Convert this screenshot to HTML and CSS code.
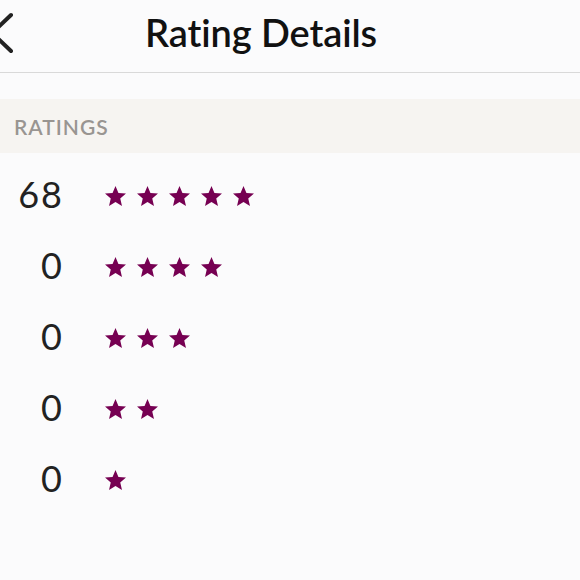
FILE: index.html
```html
<!DOCTYPE html>
<html lang="en">
<head>
    <meta charset="UTF-8">
    <meta name="viewport" content="width=device-width, initial-scale=1.0">
    <title>Rating Details</title>
    <link rel="stylesheet" href="styles.css">
</head>
<body>
    <div class="header">
        <button class="back-btn" aria-label="Back">
            <svg width="14" height="42" viewBox="0 0 14 42">
                <path d="M11 3 L-8 21 L11 39" fill="none" stroke="#222" stroke-width="4" stroke-linecap="round" stroke-linejoin="round"/>
            </svg>
        </button>
        <h1>Rating Details</h1>
    </div>

    <div class="section-title">RATINGS</div>

    <div class="ratings">
        <div class="rating-row">
            <span class="count">68</span>
            <span class="stars" data-stars="5"></span>
        </div>
        <div class="rating-row">
            <span class="count">0</span>
            <span class="stars" data-stars="4"></span>
        </div>
        <div class="rating-row">
            <span class="count">0</span>
            <span class="stars" data-stars="3"></span>
        </div>
        <div class="rating-row">
            <span class="count">0</span>
            <span class="stars" data-stars="2"></span>
        </div>
        <div class="rating-row">
            <span class="count">0</span>
            <span class="stars" data-stars="1"></span>
        </div>
    </div>

    <script>
        const star = `<svg class="star" width="23" height="23" viewBox="0 0 24 24"><path d="M12 1L15.06 8.29L22.94 8.95L16.95 14.11L18.76 21.8L12 17.7L5.24 21.8L7.05 14.11L1.06 8.95L8.94 8.29Z"/></svg>`;
        document.querySelectorAll(".stars").forEach(el => {
            el.innerHTML = star.repeat(parseInt(el.dataset.stars));
        });
    </script>
</body>
</html>
```

FILE: styles.css
```css
body {
    font-family: Lato, "Open Sans", sans-serif;
    margin: 0;
    padding: 0;
    background-color: #fbfbfc;
    color: #222;
}
.header {
    display: flex;
    align-items: center;
    height: 72px;
    border-bottom: 1px solid #d9d9d9;
}
.back-btn {
    display: flex;
    width: 145px;
    height: 72px;
    padding: 12px 0 0;
    align-items: flex-start;
    background: none;
    border: none;
}
.header h1 {
    margin: 0;
    font-size: 38px;
    font-weight: 600;
    color: #111;
    padding-bottom: 8px;
    letter-spacing: -0.1px;
}
.section-title {
    margin-top: 26px;
    height: 54px;
    padding-left: 14px;
    display: flex;
    align-items: center;
    background-color: #f6f4f1;
    color: #999591;
    font-size: 21px;
    font-weight: 600;
    letter-spacing: 1px;
}
.ratings {
    padding-top: 8px;
}
.rating-row {
    display: flex;
    align-items: center;
    height: 71px;
}
.count {
    width: 64px;
    margin-bottom: 6px;
    text-align: right;
    font-size: 36px;
    font-weight: 400;
    letter-spacing: 2px;
    color: #222;
}
.stars {
    display: flex;
    gap: 9px;
    margin-left: 40px;
}
.star {
    fill: #760052;
}
```
